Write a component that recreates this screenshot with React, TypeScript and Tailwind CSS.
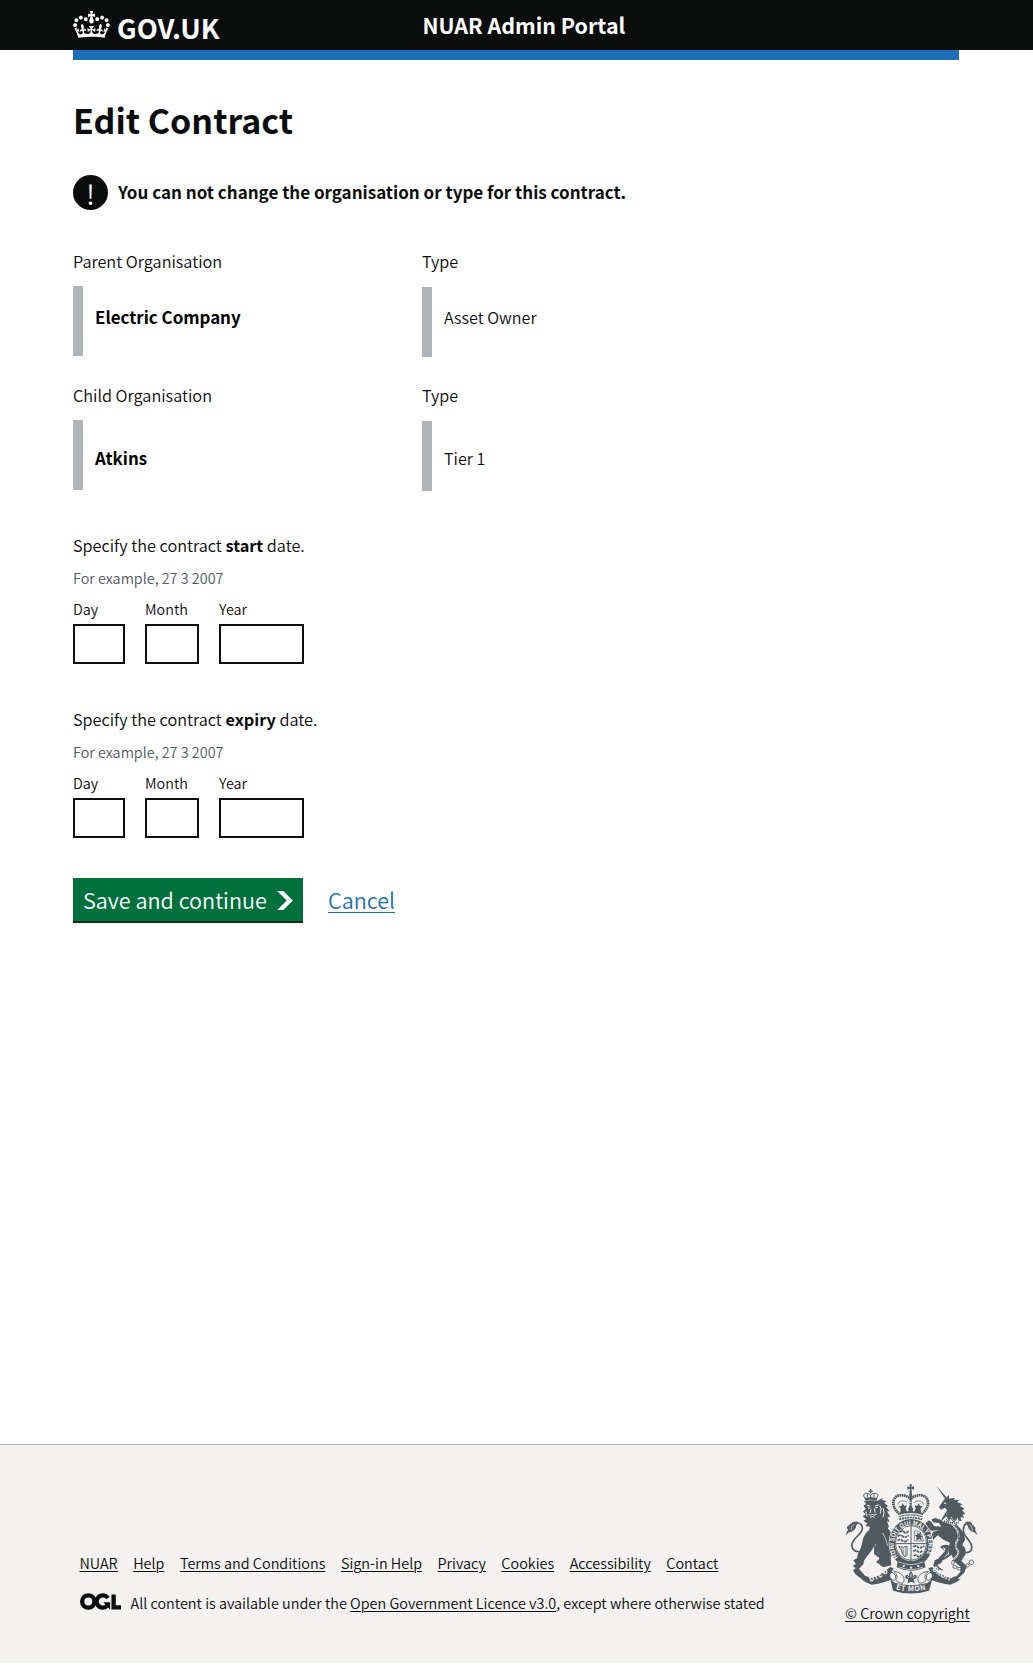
const FOOTER_LINKS = [
  "NUAR",
  "Help",
  "Terms and Conditions",
  "Sign-in Help",
  "Privacy",
  "Cookies",
  "Accessibility",
  "Contact",
];

function Crown() {
  return (
    <svg className="mt-[11px] h-[27px] w-[37px] shrink-0" viewBox="0 0 132 97" fill="currentColor" aria-hidden="true">
      <path d="M25 30.2c3.5 1.5 7.7-.2 9.1-3.7 1.5-3.6-.2-7.8-3.9-9.2-3.6-1.4-7.6.3-9.1 3.9-1.4 3.5.3 7.5 3.9 9zM9 39.5c3.6 1.5 7.8-.2 9.2-3.7 1.5-3.6-.2-7.8-3.9-9.1-3.6-1.5-7.6.2-9.1 3.8-1.4 3.5.3 7.5 3.8 9zM4.4 57.2c3.5 1.5 7.7-.2 9.1-3.8 1.5-3.6-.2-7.7-3.9-9.1-3.5-1.5-7.6.3-9.1 3.8-1.4 3.5.3 7.6 3.9 9.1zm38.3-21.4c3.5 1.5 7.7-.2 9.1-3.8 1.5-3.6-.2-7.7-3.9-9.1-3.6-1.5-7.6.3-9.1 3.8-1.3 3.6.4 7.7 3.9 9.1zm64.4-5.6c-3.6 1.5-7.8-.2-9.1-3.7-1.5-3.6.2-7.8 3.8-9.2 3.6-1.4 7.7.3 9.2 3.9 1.3 3.5-.4 7.5-3.9 9zm15.9 9.3c-3.6 1.5-7.7-.2-9.1-3.7-1.5-3.6.2-7.8 3.7-9.1 3.6-1.5 7.7.2 9.2 3.8 1.5 3.5-.3 7.5-3.8 9zm4.7 17.7c-3.6 1.5-7.8-.2-9.2-3.8-1.5-3.6.2-7.7 3.9-9.1 3.6-1.5 7.7.3 9.2 3.8 1.3 3.5-.4 7.6-3.9 9.1zM89.3 35.8c-3.6 1.5-7.8-.2-9.2-3.8-1.4-3.6.2-7.7 3.9-9.1 3.6-1.5 7.7.3 9.2 3.8 1.4 3.6-.3 7.7-3.9 9.1zM69.7 17.7l8.9 4.7V9.3l-8.9 2.8c-.2-.3-.5-.6-.9-.9L72.4 0H59.6l3.5 11.2c-.3.3-.6.5-.9.9l-8.8-2.8v13.1l8.8-4.7c.3.3.6.7.9.9l-5 15.4v.1c-.2.8-.4 1.6-.4 2.4 0 4.1 3.1 7.5 7 8.1h.2c.3 0 .7.1 1 .1.4 0 .7 0 1-.1h.2c4-.6 7.1-4.1 7.1-8.1 0-.8-.1-1.7-.4-2.4V34l-5.1-15.4c.4-.2.7-.6 1-.9zM66 92.8c16.9 0 32.8 1.1 47.1 3.2 4-16.9 8.9-26.7 14-33.5l-9.6-3.4c1 4.9 1.1 7.2 0 10.2-1.5-1.4-3-4.3-4.2-8.7L108.6 76c2.8-2 5-3.2 7.5-3.3-4.4 9.4-10 11.9-13.6 11.2-4.3-.8-6.3-4.6-5.6-7.9 1-4.7 5.7-5.9 8-.5 4.3-8.7-3-11.4-7.6-8.8 7.1-7.2 7.9-13.5 2.1-21.1-8 6.1-8.1 12.3-4.5 20.8-4.7-5.4-12.1-2.5-9.5 6.2 3.4-5.2 7.9-2 7.2 3.1-.6 4.3-6.4 7.8-13.5 7.2-10.3-.9-10.9-8-11.2-13.8 2.5-.5 7.1 1.8 11 7.3L80.2 60c-4.1 4.4-8 5.3-12.3 5.4 1.4-4.4 8-11.6 8-11.6H55.5s6.4 7.2 7.9 11.6c-4.2-.1-8-1-12.3-5.4l1.4 16.4c3.9-5.5 8.5-7.7 10.9-7.3-.3 5.8-.9 12.8-11.1 13.8-7.2.6-12.9-2.9-13.5-7.2-.7-5 3.8-8.3 7.1-3.1 2.7-8.7-4.6-11.6-9.4-6.2 3.7-8.5 3.6-14.7-4.6-20.8-5.8 7.6-5 13.9 2.2 21.1-4.7-2.6-11.9.1-7.7 8.8 2.3-5.5 7.1-4.2 8.1.5.7 3.3-1.3 7.1-5.7 7.9-3.5.7-9-1.8-13.5-11.2 2.5.1 4.7 1.3 7.5 3.3l-4.7-15.4c-1.2 4.4-2.7 7.2-4.3 8.7-1.1-3-.9-5.3 0-10.2l-9.5 3.4c5 6.9 9.9 16.7 14 33.5 14.8-2.1 30.8-3.2 47.7-3.2z" />
    </svg>
  );
}

function OglMark() {
  return (
    <svg className="h-[17px] w-[41px] shrink-0" viewBox="0 0 483 196" fill="none" stroke="currentColor" strokeWidth="51" aria-label="Open Government Licence">
      <circle cx="98" cy="98" r="72.5" />
      <path d="M329 59A72.5 72.5 0 1 0 316 152" />
      <path d="M275 106H355V193L332 171Z" fill="currentColor" stroke="none" />
      <path d="M396 16V168H483" />
    </svg>
  );
}

/* Royal coat of arms: lion and unicorn either side of the crowned garter. */
function RoyalArms() {
  return (
    <svg className="h-[110px] w-[133px]" viewBox="44 40 399 330" fill="#505a5f" aria-hidden="true">
      <defs>
        <path id="garter" d="M204 260A52 58 0 1 1 281 260" />
        <path id="motto-left" d="M119 334Q152 325 182 296" />
        <path id="motto-mid" d="M196 356Q242 368 290 356" />
        <path id="motto-right" d="M304 297Q332 324 368 334" />
      </defs>

      {/* imperial crown */}
      <path d="M237 41h8l-2 9 8-3v10l-8-3 2 13h-8l2-13-8 3V47l8 3z" />
      <circle cx="241" cy="72" r="5" />
      <g fill="none" stroke="#505a5f">
        <path d="M203 126C180 104 188 76 208 74C226 72 236 80 241 86C246 80 256 72 274 74C294 76 302 104 279 126" strokeWidth="8" strokeDasharray="5 1.5" />
        <path d="M241 76V124" strokeWidth="7" strokeDasharray="5 2" />
        <path d="M202 102C205 90 220 86 230 96M280 102C277 90 262 86 252 96" strokeWidth="2" />
        <path d="M203 130Q241 118 279 130" strokeWidth="6" />
        <path d="M205 138Q241 127 277 138" strokeWidth="3" />
        <path d="M207 146Q241 136 275 146" strokeWidth="6" strokeDasharray="6 2" />
      </g>
      <path d="M217 98l5 8 8-2-4 9 4 10-20 3 1-12-6-7 8-1zM265 98l-5 8-8-2 4 9-4 10 20 3-1-12 6-7-8-1zM241 104l8 10-3 9h-10l-3-9z" />

      {/* lion crown and head */}
      <path d="M119 55h4v5h5v3h-5l1 5h-6l1-5h-5v-3h5z" />
      <path d="M104 82C97 74 101 67 109 68Q117 68 121 74Q125 68 134 68C142 67 146 74 139 82M121 74V82M111 71V80M131 71V80" fill="none" stroke="#505a5f" strokeWidth="3" />
      <path d="M103 82Q121 77 140 82L139 90Q121 85 104 90z" />
      <path d="M101 92Q121 86 142 90L157 81L155 88L168 91L162 97L174 107L167 109L178 122L170 122L180 139L171 138L178 154L170 152L176 168L172 172L184 189L178 196L190 212L178 210L182 228L172 222L166 215Q151 205 142 192L132 188L128 177L116 177L119 168L105 166L111 158L99 151L107 146L97 136L106 132L98 122L106 116L100 105L107 99z" />
      <path d="M110 103l10 4M134 107l11-5M112 111l7 2M134 112l8-2M122 114l-3 13M131 113l4 13M115 131q6 5 11 0q6 5 13-1M119 140q7-5 14 0M148 104q8 10 2 24M158 112q6 14 0 28M107 122q-2 9 4 15" fill="none" stroke="#f3f2f1" strokeWidth="3" />

      {/* lion body and legs */}
      <path d="M128 173L154 178L182 229L181 258C174 285 150 284 137 275L148 263L131 249L132 229C119 246 108 258 101 270L99 281L86 294L104 315L118 320L116 333L94 325L75 311L68 299L76 293L67 285L77 280L69 269L80 263L83 249C91 235 94 226 96 214C99 196 110 178 128 173z" />
      <path d="M164 190L181 187L188 196L176 203L184 216L178 229L188 244L188 257L175 251L163 225z" />
      <path d="M150 246L180 253L183 284L159 290L146 281L160 271z" />
      <path d="M136 220Q133 232 136 244L149 249L159 240Q148 226 136 220z" fill="#f3f2f1" />
      <path d="M138 221Q155 217 168 237L177 254Q160 258 145 248Q138 243 132 249Q130 233 138 221z" />
      <path d="M157 187q10 16 15 38M130 227q-5 16 0 24" fill="none" stroke="#f3f2f1" strokeWidth="2" />
      <path d="M96 240C78 249 62 237 65 219C70 199 99 190 96 170C94 158 80 153 71 161" fill="none" stroke="#505a5f" strokeWidth="5" />
      <path d="M84 154Q78 162 76 171Q71 183 57 184L48 193Q47 181 54 177Q44 170 57 163Q69 149 84 154z" />
      <path d="M72 161Q61 166 62 178" fill="none" stroke="#f3f2f1" strokeWidth="2" />

      {/* unicorn */}
      <path d="M318 45L348 79L344 85z" />
      <path d="M320 47L346 83" stroke="#f3f2f1" strokeWidth="1" strokeDasharray="2 3" />
      <path d="M343 85L356 73L356 84L374 81L370 87L387 88L380 94L396 101L389 106L403 114L395 119L405 129L397 132L401 142L390 139L394 151L381 151L379 163Q402 181 404 206L396 224Q410 234 405 252L393 270L408 286L402 306L387 320L377 332L364 331L366 320L379 316L390 304L391 289L371 272L364 252Q350 263 335 270L334 276L321 283L328 291L339 298L323 301L309 285L313 269L329 261L343 241L329 229Q344 218 356 226L359 216L339 207L322 194L307 209L300 199L309 183L327 179L301 180L291 169L285 158L296 149L304 155L311 166L333 168L326 157L307 155L304 146L315 142L333 148L336 141L350 119L344 111L332 117L326 109L336 94z" />
      <path d="M341 97l5-2 1 4-5 1zM354 119Q351 132 341 144L335 158" fill="#f3f2f1" />
      <path d="M348 137L355 149L363 138L371 151L382 141L387 158L369 163L350 158L334 151z" fill="#f3f2f1" />
      <path d="M341 151Q364 160 385 155" fill="none" stroke="#505a5f" strokeWidth="5" strokeDasharray="4 2" />
      <path d="M347 144l7 9 8-11 8 12 9-9" fill="none" stroke="#505a5f" strokeWidth="3" />
      <path d="M337 229L356 229L356 249L343 260L334 262L344 244z" fill="#f3f2f1" />
      <path d="M331 228Q344 218 356 226L355 245L343 258L332 267L325 261L344 244L345 233z" />
      <path d="M396 239C410 252 426 244 424 226C421 207 397 198 399 176C401 158 411 155 419 163" fill="none" stroke="#505a5f" strokeWidth="5" />
      <path d="M404 154Q421 149 427 163Q439 170 434 177L442 193L431 185Q416 181 413 168Q410 160 404 154z" />
      <path d="M418 161Q426 168 426 180" fill="none" stroke="#f3f2f1" strokeWidth="2" />
      <path d="M367 162Q391 185 383 207Q370 221 380 237Q392 248 370 265" fill="none" stroke="#f3f2f1" strokeWidth="5" />
      <path d="M367 162Q391 185 383 207Q370 221 380 237Q392 248 370 265" fill="none" stroke="#505a5f" strokeWidth="2.5" strokeDasharray="6 3" />
      <g fill="none" stroke="#505a5f" strokeWidth="2.5">
        <ellipse cx="388" cy="198" rx="5" ry="8" />
        <ellipse cx="397" cy="208" rx="6" ry="4" />
        <ellipse cx="368" cy="276" rx="4" ry="7" />
        <ellipse cx="374" cy="289" rx="7" ry="4" />
        <ellipse cx="387" cy="294" rx="7" ry="4" />
        <ellipse cx="401" cy="292" rx="7" ry="4" />
        <ellipse cx="412" cy="284" rx="5" ry="5" />
        <circle cx="423" cy="275" r="7" />
      </g>

      {/* garter and shield */}
      <ellipse cx="242" cy="217" rx="67" ry="74" fill="#f3f2f1" />
      <ellipse cx="242" cy="217" rx="65" ry="72" />
      <ellipse cx="242" cy="217" rx="48" ry="54" fill="#f3f2f1" />
      <ellipse cx="242" cy="217" rx="46" ry="52" fill="none" stroke="#505a5f" strokeWidth="2.5" />
      <path d="M242 165V269M195 219H289" stroke="#505a5f" strokeWidth="3" />
      <g fill="none" stroke="#505a5f" strokeWidth="5">
        <path d="M209 184q8-7 12 0t14-3M203 197q9-7 14 0t18-3M202 210q9-7 14 0t18-3" strokeDasharray="9 2" />
        <path d="M249 229q8-7 13 0t20-3M249 242q8-7 13 0t16-3M250 256q7-6 11 0t11-4" strokeDasharray="9 2" />
      </g>
      <path d="M252 181Q275 176 279 211H252z" fill="none" stroke="#505a5f" strokeWidth="2" />
      <path d="M260 185l6 5 6-7-1 12 7 2-7 5 6 8-11-5-8 5 1-11-6-5 8-1z" />
      <path d="M205 227Q217 233 230 227V254Q224 263 218 251Q215 238 205 227z" fill="none" stroke="#505a5f" strokeWidth="3" />
      <path d="M215 232V246M220 232V254M225 231V256" stroke="#505a5f" strokeWidth="1.5" />
      <g fill="#f3f2f1" fontFamily="Noto Sans CJK SC, sans-serif" fontWeight="700">
        <text fontSize="18">
          <textPath href="#garter" textLength="244" lengthAdjust="spacing">HONI SOIT QUI MAL Y PENSE</textPath>
        </text>
      </g>
      <path d="M202 271Q242 291 281 271L286 290Q242 311 199 290z" />
      <path d="M204 273Q242 291 279 273M207 289Q242 305 278 289" fill="none" stroke="#f3f2f1" strokeWidth="2" />
      <path d="M220 283l5 3-5 4-5-4zM242 287l4 4-4 4-4-4zM264 283l5 3-5 4-5-4z" fill="#f3f2f1" />

      {/* fleur beneath the garter */}
      <path d="M241 300Q250 309 247 318Q254 308 259 316Q261 326 250 325L253 338L242 333L231 338L234 325Q223 326 225 316Q230 308 237 318Q234 309 241 300z" />
      <path d="M242 308v12M231 317l5 5M253 317l-5 5" stroke="#f3f2f1" strokeWidth="2.5" />

      {/* motto scroll */}
      <path d="M93 326Q145 326 179 289L190 293Q183 302 184 312L193 323Q153 341 124 342Q106 337 93 326z" />
      <path d="M391 326Q339 326 305 289L294 293Q301 302 300 312L291 323Q331 341 360 342Q379 337 391 326z" />
      <path d="M179 322Q184 330 195 337Q242 350 291 337Q301 330 307 322L296 360Q242 377 188 360z" />
      <g fill="#f3f2f1" stroke="#505a5f" strokeWidth="2.5">
        <path d="M178 312Q182 303 188 306Q199 314 196 324Q193 334 183 325Q176 320 178 312z" />
        <path d="M306 312Q302 303 296 306Q285 314 288 324Q291 334 301 325Q308 320 306 312z" />
        <path d="M190 301Q211 304 220 318Q224 334 215 338Q201 336 196 328Q207 318 190 301z" />
        <path d="M294 301Q273 304 264 318Q260 334 269 338Q283 336 288 328Q277 318 294 301z" />
      </g>
      <g fill="#f3f2f1" fontFamily="Noto Sans CJK SC, sans-serif" fontWeight="700" fontSize="22">
        <text><textPath href="#motto-left" textLength="64">DIEU</textPath></text>
        <text><textPath href="#motto-mid" textLength="92">ET MON</textPath></text>
        <text><textPath href="#motto-right" textLength="68">DROIT</textPath></text>
      </g>
    </svg>
  );
}

function Organisation({ label, name, type }: { label: string; name: string; type: string }) {
  const tall = name === "Atkins";
  return (
    <div className="grid grid-cols-[349px_1fr]">
      <div>
        <p className="text-[16.25px] leading-6">{label}</p>
        <div className="mt-[13px] flex h-[70px] items-start border-l-10 border-[#b1b4b6] pl-3">
          <strong className={tall ? "mt-[26px] text-[16.9px] leading-6 text-black" : "mt-[19px] text-[16.9px] leading-6 text-black"}>{name}</strong>
        </div>
      </div>
      <div>
        <p className="text-[16.25px] leading-6">Type</p>
        <div className="mt-[14px] flex h-[70px] items-start border-l-10 border-[#b1b4b6] pl-3">
          <span className={tall ? "mt-[25px] text-[16.1px] leading-6" : "mt-[18px] text-[16.1px] leading-6"}>{type}</span>
        </div>
      </div>
    </div>
  );
}

function DateField({ kind }: { kind: string }) {
  return (
    <fieldset>
      <legend className="text-[16.25px] leading-6">
        Specify the contract <strong>{kind}</strong> date.
      </legend>
      <p className="mt-[11px] text-[14.4px] leading-5 text-[#505a5f]">For example, 27 3 2007</p>
      <div className="mt-[11px] flex gap-5 text-[14.4px] leading-5">
        <label className="flex flex-col gap-[5px]">
          Day
          <input className="h-10 w-[52px] border-2 border-[#0b0c0c] bg-white" />
        </label>
        <label className="flex flex-col gap-[5px]">
          Month
          <input className="h-10 w-[54px] border-2 border-[#0b0c0c] bg-white" />
        </label>
        <label className="flex flex-col gap-[5px]">
          Year
          <input className="h-10 w-[85px] border-2 border-[#0b0c0c] bg-white" />
        </label>
      </div>
    </fieldset>
  );
}

export default function App() {
  return (
    <div className="flex h-[1668px] w-[1033px] flex-col bg-white font-['Noto_Sans_CJK_SC',sans-serif] font-[350] text-[#0b0c0c]">
      <header className="h-[50px] bg-[#0b0c0c] pl-[73px] text-white">
        <div className="flex items-start">
          <div className="flex w-[349.5px] gap-[7px]">
            <Crown />
            <span className="mt-[9px] text-[27.4px] leading-9 font-bold">GOV.UK</span>
          </div>
          <span className="mt-[9px] text-[21.45px] leading-8 font-bold">NUAR Admin Portal</span>
        </div>
      </header>
      <div className="ml-[73px] h-[10px] w-[886px] shrink-0 bg-[#1d70b8]" />

      <main className="flex-1 pt-10 pl-[73px]">
        <h1 className="text-[34px] leading-10 font-bold">Edit Contract</h1>

        <div className="mt-[35px] flex items-center gap-[10px]">
          <span className="flex size-[35px] items-center justify-center rounded-full bg-[#0b0c0c] pt-[1px] text-[27px] leading-[35px] text-white">!</span>
          <strong className="-mt-[2px] text-[17px] leading-6">You can not change the organisation or type for this contract.</strong>
        </div>

        <section className="mt-[39px] flex flex-col gap-[26px]">
          <Organisation label="Parent Organisation" name="Electric Company" type="Asset Owner" />
          <Organisation label="Child Organisation" name="Atkins" type="Tier 1" />
        </section>

        <form className="mt-[42px] flex flex-col gap-[43px]">
          <DateField kind="start" />
          <DateField kind="expiry" />
          <div className="-mt-[3px] flex items-start gap-[25px]">
            <button type="button" className="flex h-[45px] w-[230px] items-center gap-[10px] border-b-2 border-[#002d18] bg-[#00703c] pl-[10px] text-[21.6px] leading-8 text-white">
              <span className="mt-[1px]">Save and continue</span>
              <svg className="mt-[1px] h-[19px] w-4 shrink-0" viewBox="0 0 33 40" fill="currentColor" aria-hidden="true">
                <path d="M0 0h13l20 20-20 20H0l20-20z" />
              </svg>
            </button>
            <a href="#" className="mt-[6px] text-[21.6px] leading-8 text-[#1d70b8] underline decoration-1 underline-offset-[3px]">Cancel</a>
          </div>
        </form>
      </main>

      <footer className="mb-[5px] flex h-[219px] shrink-0 justify-between border-t border-[#b1b4b6] bg-[#f3f2f1] pr-[55.5px] pl-[79.5px] text-[14.43px] leading-5">
        <div className="pt-[108px]">
          <nav className="flex gap-[15.5px]">
            {FOOTER_LINKS.map((link) => (
              <a key={link} href="#" className="whitespace-nowrap underline decoration-1 underline-offset-[2px]">{link}</a>
            ))}
          </nav>
          <div className="mt-5 flex gap-[10px]">
            <OglMark />
            <p className="whitespace-nowrap">
              All content is available under the{" "}
              <a href="#" className="underline decoration-1 underline-offset-[2px]">Open Government Licence v3.0</a>, except where otherwise stated
            </p>
          </div>
        </div>
        <div className="flex flex-col items-start pt-[39px]">
          <RoyalArms />
          <a href="#" className="mt-[9px] ml-[0.5px] underline decoration-1 underline-offset-[2px]">© Crown copyright</a>
        </div>
      </footer>
    </div>
  );
}
